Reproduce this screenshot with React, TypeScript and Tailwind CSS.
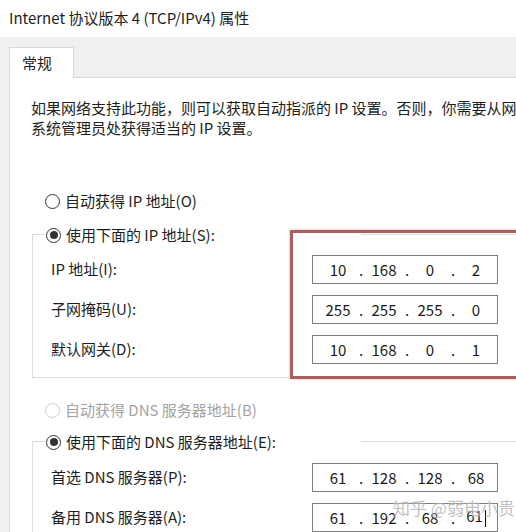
const font = "font-['Noto_Sans_CJK_SC','Noto_Sans',sans-serif]";

function Radio({ checked, disabled }: { checked?: boolean; disabled?: boolean }) {
  return (
    <span
      className={`inline-flex items-center justify-center w-[15px] h-[15px] rounded-full border bg-white shrink-0 ${
        disabled ? "border-[#cfcfcf]" : "border-[#333]"
      }`}
    >
      {checked && <span className="w-[8px] h-[8px] rounded-full bg-[#333]" />}
    </span>
  );
}

function IpBox({ parts, caret }: { parts: string[]; caret?: boolean }) {
  return (
    <div className="flex items-center w-[186px] h-[29px] border border-[#7d7d7d] bg-white pl-[5px] text-[15px] text-[#1a1a1a]">
      {parts.map((p, i) => (
        <div key={i} className="flex items-center">
          <span className="w-[40px] text-center leading-none">
            {p}
            {caret && i === 3 && <span className="inline-block w-[1px] h-[17px] bg-black align-middle ml-[2px]" />}
          </span>
          {i < 3 && <span className="w-[6px] text-center leading-none">.</span>}
        </div>
      ))}
    </div>
  );
}

function Row({ label, parts, caret }: { label: string; parts: string[]; caret?: boolean }) {
  return (
    <div className="flex items-center h-[29px]">
      <span className="w-[261px] text-[15px] text-[#1e1e1e]">{label}</span>
      <IpBox parts={parts} caret={caret} />
    </div>
  );
}

export default function App() {
  return (
    <div className={`relative w-[516px] h-[532px] overflow-hidden bg-[#f0f0f0] ${font}`}>
      <div className="h-[37px] bg-white flex items-center pl-[9px] pb-[1px] text-[15px] text-[#1e1e1e]">
        Internet 协议版本 4 (TCP/IPv4) 属性
      </div>

      <div className="pl-[9px] pt-[10px]">
        <div className="relative z-10 w-[65px] h-[31px] -mb-[1px] bg-white border border-b-0 border-[#d9d9d9] flex items-center pl-[12px] text-[15px] text-[#1e1e1e]">
          常规
        </div>

        <div className="bg-white border-t border-l border-[#d9d9d9] h-[470px] pl-[22px] pt-[20px]">
          <p className="-ml-[1px] text-[15px] leading-[20px] text-[#1e1e1e] whitespace-nowrap">
            如果网络支持此功能，则可以获取自动指派的 IP 设置。否则，你需要从网络
            <br />
            系统管理员处获得适当的 IP 设置。
          </p>

          <div className="mt-[53px] h-[20px] flex items-center gap-[5px] pl-[13px] text-[15px] text-[#1e1e1e]">
            <Radio />
            <span>自动获得 IP 地址(O)</span>
          </div>

          <div className="relative mt-[23px] border-t border-l border-b border-[#dcdcdc] pb-[13px]">
            <div className="-mt-[10px] ml-[12px] w-[316px] h-[20px] flex items-center gap-[5px] pl-[1px] bg-white text-[15px] text-[#1e1e1e]">
              <Radio checked />
              <span>使用下面的 IP 地址(S):</span>
            </div>
            <div className="mt-[10px] pl-[18px] flex flex-col gap-[11px]">
              <Row label="IP 地址(I):" parts={["10", "168", "0", "2"]} />
              <Row label="子网掩码(U):" parts={["255", "255", "255", "0"]} />
              <Row label="默认网关(D):" parts={["10", "168", "0", "1"]} />
            </div>
            <div className="absolute left-[257px] -top-[5px] w-[300px] h-[149px] border-[3px] border-[#a5605e] shadow-[0_0_3px_rgba(210,90,90,0.45)] pointer-events-none" />
          </div>

          <div className="mt-[22px] h-[20px] flex items-center gap-[5px] pl-[13px] text-[15px] text-[#a3a3a3]">
            <Radio disabled />
            <span>自动获得 DNS 服务器地址(B)</span>
          </div>

          <div className="mt-[21px] border-t border-l border-[#dcdcdc] pb-[20px]">
            <div className="-mt-[10px] ml-[12px] w-[316px] h-[20px] flex items-center gap-[5px] pl-[1px] bg-white text-[15px] text-[#1e1e1e]">
              <Radio checked />
              <span>使用下面的 DNS 服务器地址(E):</span>
            </div>
            <div className="mt-[11px] pl-[18px] flex flex-col gap-[11px]">
              <Row label="首选 DNS 服务器(P):" parts={["61", "128", "128", "68"]} />
              <Row label="备用 DNS 服务器(A):" parts={["61", "192", "68", "61"]} caret />
            </div>
          </div>
        </div>
      </div>

      <div className="absolute left-[393px] top-[495px] text-[17px] text-[rgba(140,140,140,0.55)] [text-shadow:0_0_2px_rgba(255,255,255,0.9)] whitespace-nowrap pointer-events-none">
        知乎 @弱电小贵
      </div>
    </div>
  );
}
